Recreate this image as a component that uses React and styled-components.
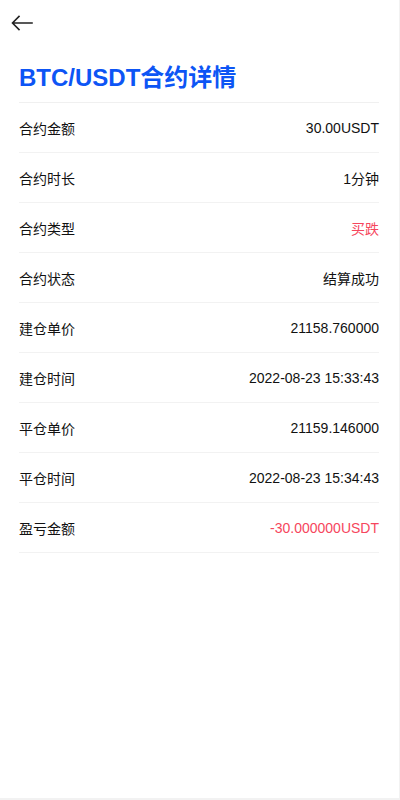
import React from "react";
import styled, { createGlobalStyle } from "styled-components";

const Global = createGlobalStyle`
  html, body { margin: 0; padding: 0; background: #f2f2f2; }
  body { font-family: "Liberation Sans", Arial, "Noto Sans CJK SC", sans-serif; }
`;

const Page = styled.div`
  width: 399px;
  height: 798px;
  background: #fff;
  box-sizing: border-box;
`;

const Header = styled.div`
  height: 46px;
  display: flex;
  align-items: center;
  padding-left: 10px;
`;

const BackButton = styled.button`
  border: 0;
  background: none;
  padding: 0;
  width: 24px;
  height: 24px;
  display: flex;
  align-items: center;
  justify-content: center;
  cursor: pointer;
`;

const Content = styled.div`
  padding: 0 20px 0 19px;
`;

const Title = styled.h1`
  margin: 0;
  padding-top: 18px;
  height: 38px;
  font-size: 24px;
  line-height: 28px;
  font-weight: 700;
  color: #0d55f5;
  border-bottom: 1px solid #f0f0f0;
`;

const Row = styled.div`
  height: 49px;
  display: flex;
  align-items: center;
  justify-content: space-between;
  border-bottom: 1px solid #f2f2f2;
  font-size: 14px;
  color: #111;
`;

const Label = styled.span`
  color: #111;
`;

const Value = styled.span`
  color: ${(p) => (p.$red ? "#f6465d" : "#111")};
`;

const rows = [
  ["合约金额", "30.00USDT"],
  ["合约时长", "1分钟"],
  ["合约类型", "买跌", true],
  ["合约状态", "结算成功"],
  ["建仓单价", "21158.760000"],
  ["建仓时间", "2022-08-23 15:33:43"],
  ["平仓单价", "21159.146000"],
  ["平仓时间", "2022-08-23 15:34:43"],
  ["盈亏金额", "-30.000000USDT", true],
];

export default function App() {
  return (
    <>
      <Global />
      <Page>
        <Header>
          <BackButton aria-label="back">
            <svg width="22" height="16" viewBox="0 0 22 16" fill="none">
              <path d="M21 8H2M8 1.5L1.5 8L8 14.5" stroke="#222" strokeWidth="1.6" strokeLinecap="square" />
            </svg>
          </BackButton>
        </Header>
        <Content>
          <Title>BTC/USDT合约详情</Title>
          {rows.map(([l, v, red]) => (
            <Row key={l}>
              <Label>{l}</Label>
              <Value $red={red}>{v}</Value>
            </Row>
          ))}
        </Content>
      </Page>
    </>
  );
}
